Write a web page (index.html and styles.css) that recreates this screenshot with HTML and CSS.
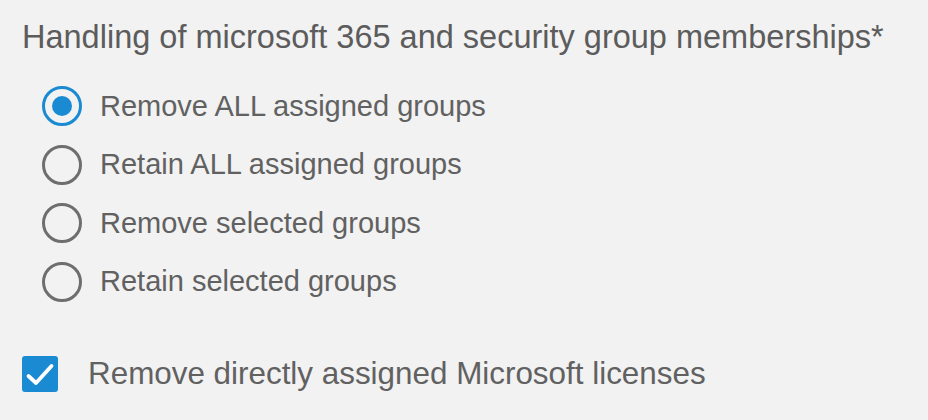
FILE: index.html
```html
<!DOCTYPE html>
<html>
<head>
<meta charset="utf-8">
<link rel="stylesheet" href="styles.css">
</head>
<body>
<div class="panel">
  <h1 class="title">Handling of microsoft 365 and security group memberships*</h1>
  <div class="radios">
    <label class="radio-row"><span class="radio checked"></span><span class="label">Remove ALL assigned groups</span></label>
    <label class="radio-row"><span class="radio"></span><span class="label">Retain ALL assigned groups</span></label>
    <label class="radio-row"><span class="radio"></span><span class="label">Remove selected groups</span></label>
    <label class="radio-row"><span class="radio"></span><span class="label">Retain selected groups</span></label>
  </div>
  <label class="check-row">
    <span class="checkbox"><svg width="36" height="36" viewBox="0 0 36 36"><path d="M6.5 20 L14 27 L29.5 10" fill="none" stroke="#fff" stroke-width="3.8" stroke-linecap="round" stroke-linejoin="round"/></svg></span>
    <span class="label">Remove directly assigned Microsoft licenses</span>
  </label>
</div>
</body>
</html>
```
FILE: styles.css
```css
html, body {
  margin: 0;
  padding: 0;
  background: #f2f2f2;
}
body {
  width: 928px;
  height: 420px;
  overflow: hidden;
  font-family: "Liberation Sans", Arial, sans-serif;
  color: #616161;
}
.panel {
  padding: 18px 0 0 22px;
}
.title {
  margin: 0;
  font-weight: normal;
  font-size: 32.5px;
  line-height: 38px;
  color: #5c5c5c;
  white-space: nowrap;
}
.radios {
  display: flex;
  flex-direction: column;
  gap: 18.5px;
  margin-top: 30px;
  padding-left: 20px;
}
.radio-row {
  display: flex;
  align-items: center;
  height: 40px;
}
.radio {
  box-sizing: border-box;
  width: 40px;
  height: 40px;
  border: 3.5px solid #6e6e6e;
  border-radius: 50%;
  display: flex;
  align-items: center;
  justify-content: center;
  flex: none;
}
.radio.checked {
  border-color: #1a8bd2;
}
.radio.checked::after {
  content: "";
  width: 20px;
  height: 20px;
  border-radius: 50%;
  background: #1a8bd2;
}
.label {
  font-size: 29px;
  margin-left: 18px;
  color: #616161;
  white-space: nowrap;
}
.check-row {
  display: flex;
  align-items: center;
  margin-top: 54.5px;
  height: 36px;
}
.checkbox {
  width: 36px;
  height: 36px;
  border-radius: 3px;
  background: #1a8bd2;
  flex: none;
  display: block;
}
.checkbox svg {
  display: block;
}
.check-row .label {
  font-size: 31.4px;
  margin-left: 30px;
}
```
